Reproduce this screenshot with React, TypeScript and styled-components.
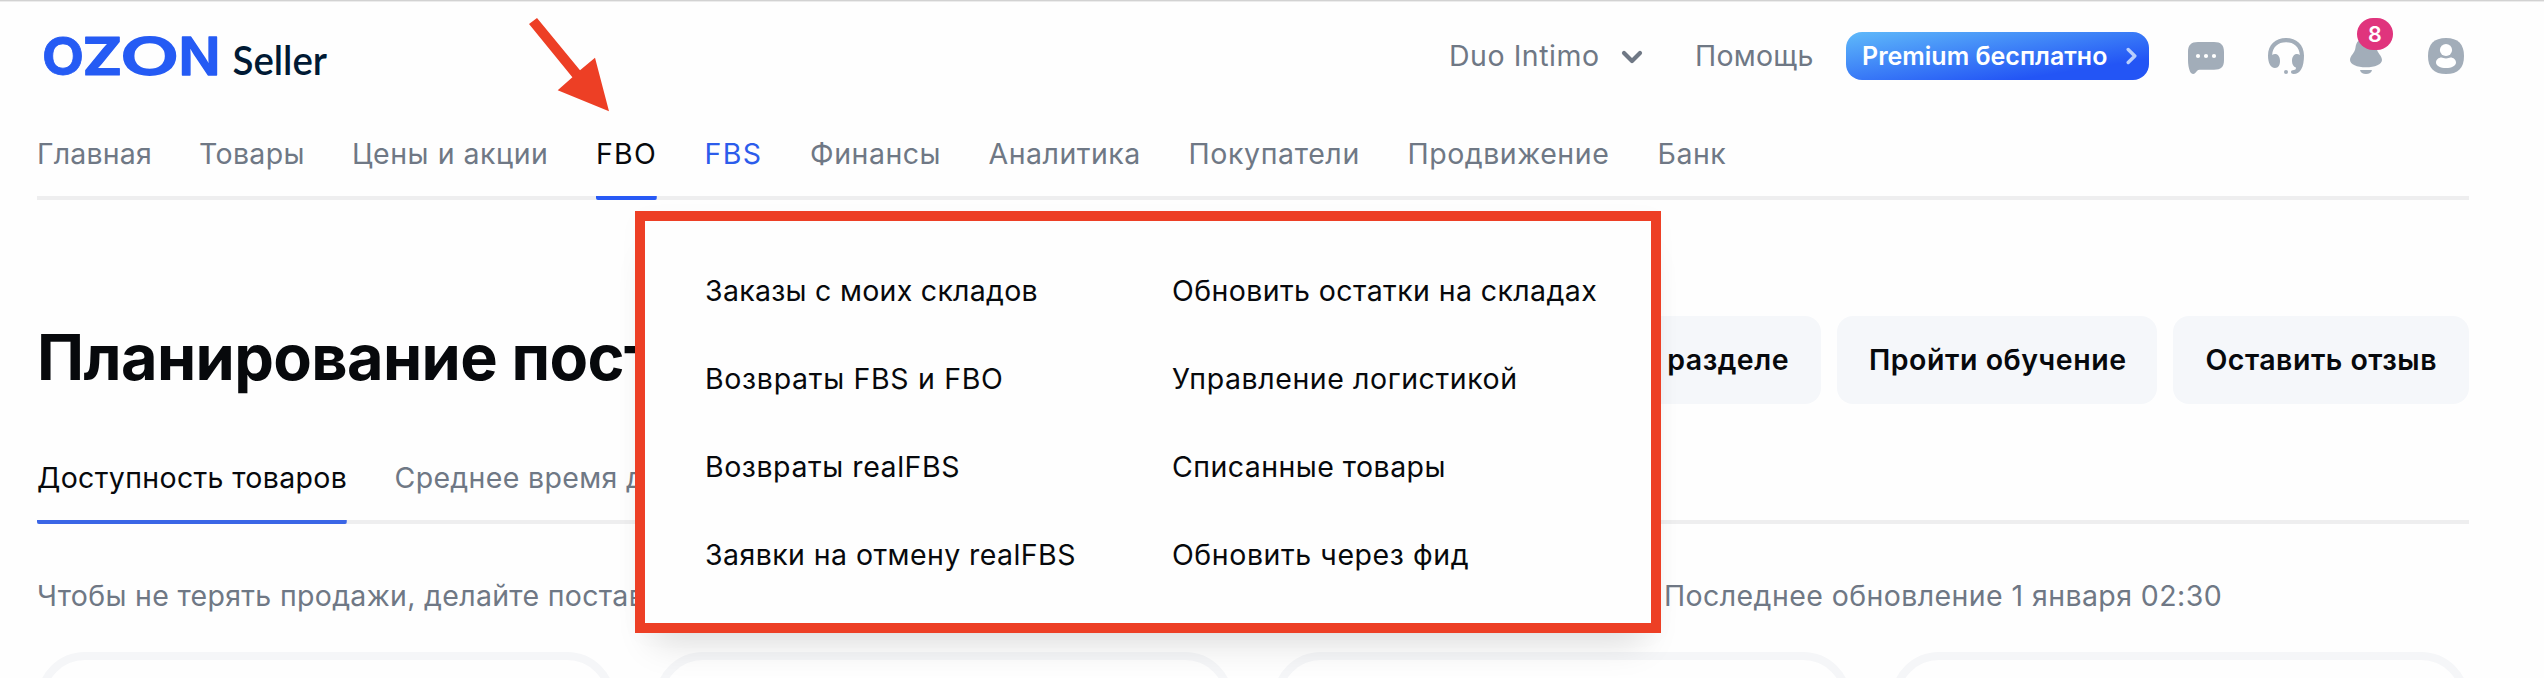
import React from "react";
import styled, { createGlobalStyle } from "styled-components";

const GlobalStyle = createGlobalStyle`
  *, *::before, *::after { box-sizing: border-box; }
  body { margin: 0; background: #fefefe; }
`;

const Page = styled.div`
  position: relative;
  height: 678px;
  padding: 0 75px 0 37px;
  overflow: hidden;
  background: #fefefe;
  box-shadow: inset 0 1px 0 #d2d2d2, inset 0 2px 0 #ececec;
  color: #07090c;
  font-family: Inter, "Noto Sans", sans-serif;
  font-size: 28.5px;
  line-height: 40px;
  white-space: nowrap;
`;

const Header = styled.header`
  display: flex;
  align-items: center;
  justify-content: space-between;
  height: 112px;
`;

const Logo = styled.svg`
  display: block;
  width: 300px;
  height: 112px;
`;

const HeaderActions = styled.div`
  display: flex;
  align-items: center;
  padding-right: 5px;
  color: #6f7885;
`;

const Account = styled.div`
  display: flex;
  align-items: center;
  justify-content: space-between;
  width: 195px;
  letter-spacing: 0.53px;
`;

const Help = styled.a`
  width: 119px;
  margin: 0 32px 0 51px;
  letter-spacing: 0.25px;
`;

const PremiumButton = styled.button`
  display: flex;
  align-items: center;
  justify-content: space-between;
  width: 303px;
  height: 48px;
  margin-right: 39px;
  padding: 0 12px 1px 16px;
  border: 0;
  border-radius: 16px;
  background: linear-gradient(to bottom right, #5fbafa, #2355f5 78%);
  color: #fff;
  font: 600 25px/40px Inter, sans-serif;
`;

const IconRow = styled.div`
  display: flex;
  gap: 44px;
  color: #a2adb9;
`;

const IconSlot = styled.span`
  position: relative;
  width: 36px;
  height: 36px;

  svg { display: block; }
`;

const Badge = styled.span`
  position: absolute;
  top: -20px;
  left: 9px;
  width: 36px;
  height: 32px;
  border-radius: 16px;
  background: #e0347d;
  color: #fff;
  font-size: 21.5px;
  font-weight: 600;
  line-height: 33px;
  text-align: center;
`;

const TabBar = styled.nav`
  display: flex;
  gap: 48px;
  box-shadow: inset 0 -4px 0 #eeeeef;
`;

type Tone = "muted" | "active" | "hover";
const tones: Record<Tone, string> = { muted: "#6f7885", active: "#07090c", hover: "#2c5ceb" };

const Tab = styled.a<{ $width: number; $spacing: number; $tone?: Tone; $line?: string }>`
  width: ${(p) => p.$width}px;
  height: 88px;
  padding-top: 22px;
  background: linear-gradient(${(p) => p.$line ?? "#eeeeef"}, ${(p) => p.$line ?? "#eeeeef"}) bottom / 100% 4px no-repeat;
  border-radius: ${(p) => (p.$line ? "0 0 2px 2px" : "0")};
  color: ${(p) => tones[p.$tone ?? "muted"]};
  letter-spacing: ${(p) => p.$spacing}px;
`;

const TitleRow = styled.div`
  display: flex;
  align-items: center;
  justify-content: space-between;
  height: 88px;
  margin: 116px 0 32px;
`;

const Title = styled.h1`
  margin: 0;
  padding-bottom: 6px;
  font-size: 63px;
  font-weight: 700;
  line-height: 72px;
  letter-spacing: -0.6px;
`;

const ButtonGroup = styled.div`
  display: flex;
  gap: 16px;
`;

const SoftButton = styled.button<{ $width: number; $spacing: number }>`
  width: ${(p) => p.$width}px;
  height: 88px;
  padding: 0 32px 1px;
  border: 0;
  border-radius: 16px;
  background: #f5f7fa;
  color: #07090c;
  font: 600 28.5px/40px Inter, sans-serif;
  letter-spacing: ${(p) => p.$spacing}px;
  text-align: right;
`;

const StatusRow = styled.div`
  display: flex;
  height: 40px;
  margin: 52px 0 36px;
  color: #6f7885;
  letter-spacing: 0.31px;
`;

const StatusHint = styled.span`
  width: 1627px;
`;

const StatusDate = styled.span`
  letter-spacing: 0.41px;
`;

const CardRow = styled.div`
  display: grid;
  grid-template-columns: repeat(4, 1fr);
  gap: 40px;
`;

const Card = styled.div`
  height: 320px;
  border: 8px solid #f5f6f8;
  border-radius: 48px;
`;

const MenuPanel = styled.div`
  position: absolute;
  top: 211px;
  left: 635px;
  display: grid;
  grid-template-columns: 467px auto;
  grid-auto-rows: 88px;
  align-items: center;
  width: 1026px;
  height: 422px;
  padding: 26px 0 0 60px;
  border: 10px solid #ed3f25;
  background: #fefefe;
  box-shadow: 0 28px 34px -18px rgba(0, 0, 0, 0.13), 0 4px 24px rgba(0, 0, 0, 0.02);
`;

const MenuItem = styled.a<{ $spacing: number }>`
  letter-spacing: ${(p) => p.$spacing}px;
`;

const Pointer = styled.svg`
  position: absolute;
  top: 14px;
  left: 524px;
`;

const sections: { label: string; width: number; spacing: number; tone?: Tone; line?: string }[] = [
  { label: "Главная", width: 114, spacing: 0.19 },
  { label: "Товары", width: 105, spacing: 0.32 },
  { label: "Цены и акции", width: 196, spacing: 0.53 },
  { label: "FBO", width: 60.5, spacing: 1.21, tone: "active", line: "#2759f5" },
  { label: "FBS", width: 57.5, spacing: 1.4, tone: "hover" },
  { label: "Финансы", width: 130.5, spacing: 0.53 },
  { label: "Аналитика", width: 152, spacing: 0.5 },
  { label: "Покупатели", width: 171, spacing: 0.62 },
  { label: "Продвижение", width: 202, spacing: 0.53 },
  { label: "Банк", width: 70, spacing: 0.5 },
];

const menu: [string, number][] = [
  ["Заказы с моих складов", 0.28],
  ["Обновить остатки на складах", 0.4],
  ["Возвраты FBS и FBO", 0.68],
  ["Управление логистикой", 0.58],
  ["Возвраты realFBS", 0.55],
  ["Списанные товары", 0.45],
  ["Заявки на отмену realFBS", 0.42],
  ["Обновить через фид", 0.57],
];

const ChatIcon = () => (
  <svg width="36" height="36" viewBox="0 0 36 36">
    <path fill="currentColor" d="M10 4h16c7 0 10 3 10 10v8c0 7-3 9.700-10 9.700H11.500c-1 0-1.700.3-2.300 1L7 35.200C5.500 36.700 3 36 2 33.500.6 30 0 26 0 22v-8C0 7 3 4 10 4z" />
    <g fill="#fff"><circle cx="10" cy="18" r="2.100" /><circle cx="18" cy="18" r="2.100" /><circle cx="26" cy="18" r="2.100" /></g>
  </svg>
);

const HeadsetIcon = () => (
  <svg width="36" height="36" viewBox="0 0 36 36" fill="currentColor">
    <path d="M18 0C7.500 0 0 7 0 17.500 0 25 2.500 30 7 30c3.500 0 5-3 5-7 0-4.300-2-7-5-7-1.200 0-2 .3-2.800.9C4.500 9 10 4.200 18 4.200S31.500 9 31.800 16.900c-.8-.6-1.600-.9-2.800-.9-3 0-5 2.700-5 7 0 3.500 1.600 5.900 3.900 6.500.2 1.500-.5 2.300-1.900 2.600-1.800.1-3 .6-3 2 0 1.200 1 1.900 2.600 1.900C32.500 36 36 29 36 17.500 36 7 28.500 0 18 0z" />
    <circle cx="18" cy="34" r="2" />
  </svg>
);

const BellIcon = () => (
  <svg width="36" height="36" viewBox="0 0 36 36" fill="currentColor">
    <path d="M18 0c-6.500 0-10 4-10.500 9.500C7 15 2 17.500 2 22c0 4.500 7 7.300 16 7.300S34 26.500 34 22c0-4.500-5-7-5.500-12.500C28 4 24.500 0 18 0z" />
    <path d="M12 32h12c-.5 2.700-2.700 4-6 4s-5.500-1.300-6-4z" />
  </svg>
);

const UserIcon = () => (
  <svg width="36" height="36" viewBox="0 0 36 36">
    <path fill="currentColor" d="M18 0c12 0 18 6 18 18s-6 18-18 18S0 30 0 18 6 0 18 0z" />
    <circle cx="18" cy="12" r="6.100" fill="#fff" />
    <path fill="#fff" d="M13.500 19.500c1.200 0 2.300.9 4.500.9s3.300-.9 4.500-.9c3 0 5.500 2.300 5.500 5 0 3.500-4.500 5.500-10 5.500S8 28 8 24.500c0-2.700 2.500-5 5.500-5z" />
  </svg>
);

export default function App() {
  return (
    <Page>
      <GlobalStyle />
      <Header>
        <Logo viewBox="37 0 300 112" aria-label="OZON Seller">
          <g fill="#255bf4" stroke="#255bf4" strokeLinejoin="round" fontFamily="Inter" fontSize="52">
            <text x="42" y="75" fontWeight="700" strokeWidth="0.800" textLength="42" lengthAdjust="spacingAndGlyphs">O</text>
            <text x="82.600" y="75" fontWeight="700" strokeWidth="1.200" textLength="40" lengthAdjust="spacingAndGlyphs">Z</text>
            <text x="120.200" y="75" fontWeight="500" strokeWidth="2" textLength="58.800" lengthAdjust="spacingAndGlyphs">O</text>
            <text x="178.600" y="75" fontWeight="600" strokeWidth="1.400" textLength="42" lengthAdjust="spacingAndGlyphs">N</text>
          </g>
          <text x="232.500" y="75" fill="#001a34" fontFamily="Lato" fontSize="41" fontWeight="600" textLength="94.500" lengthAdjust="spacingAndGlyphs">Seller</text>
        </Logo>
        <HeaderActions>
          <Account>
            Duo Intimo
            <svg width="24" height="16" viewBox="0 0 24 16" fill="none" stroke="currentColor" strokeWidth="4.200" strokeLinecap="round" strokeLinejoin="round">
              <path d="M4 5l8 8 8-8" />
            </svg>
          </Account>
          <Help>Помощь</Help>
          <PremiumButton>
            Premium бесплатно
            <svg width="11" height="18" viewBox="0 0 11 18" fill="none" stroke="#b9cffc" strokeWidth="3.400" strokeLinecap="round" strokeLinejoin="round">
              <path d="M2.200 2.500L8.800 9l-6.600 6.500" />
            </svg>
          </PremiumButton>
          <IconRow>
            <IconSlot><ChatIcon /></IconSlot>
            <IconSlot><HeadsetIcon /></IconSlot>
            <IconSlot><BellIcon /><Badge>8</Badge></IconSlot>
            <IconSlot><UserIcon /></IconSlot>
          </IconRow>
        </HeaderActions>
      </Header>

      <TabBar>
        {sections.map((s) => (
          <Tab key={s.label} $width={s.width} $spacing={s.spacing} $tone={s.tone} $line={s.line}>{s.label}</Tab>
        ))}
      </TabBar>

      <TitleRow>
        <Title>Планирование поставок</Title>
        <ButtonGroup>
          <SoftButton $width={240} $spacing={0.5}>О разделе</SoftButton>
          <SoftButton $width={320} $spacing={0.54}>Пройти обучение</SoftButton>
          <SoftButton $width={296} $spacing={0.5}>Оставить отзыв</SoftButton>
        </ButtonGroup>
      </TitleRow>

      <TabBar>
        <Tab $width={309.5} $spacing={0.34} $tone="active" $line="#3b66e6">Доступность товаров</Tab>
        <Tab $width={340} $spacing={0.33}>Среднее время доставки</Tab>
      </TabBar>

      <StatusRow>
        <StatusHint>Чтобы не терять продажи, делайте поставки</StatusHint>
        <StatusDate>Последнее обновление 1 января 02:30</StatusDate>
      </StatusRow>

      <CardRow>
        <Card /><Card /><Card /><Card />
      </CardRow>

      <MenuPanel>
        {menu.map(([label, spacing]) => (
          <MenuItem key={label} $spacing={spacing}>{label}</MenuItem>
        ))}
      </MenuPanel>

      <Pointer width="90" height="100" viewBox="524 14 90 100">
        <path fill="#ed3f25" d="M537 18l43 52.300L595 57.700l14 53.600-51.300-21 14.700-13L529 24z" />
      </Pointer>
    </Page>
  );
}
